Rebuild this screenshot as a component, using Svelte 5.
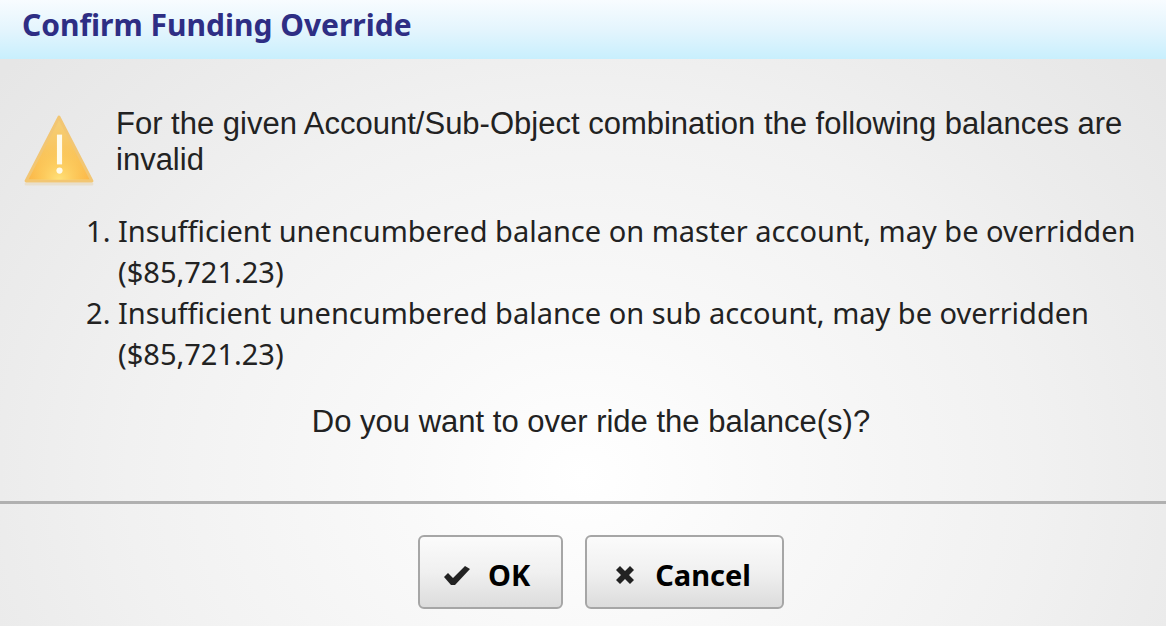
<script lang="ts">
    let title = "Confirm Funding Override"
    let balances: string[] = [
        "Insufficient unencumbered balance on master account, may be overridden ($85,721.23)",
        "Insufficient unencumbered balance on sub account, may be overridden ($85,721.23)",
    ]
    let open = $state(true)

    const close = () => {
        open = false
    }
</script>

{#if open}
    <div class="dialog" role="alertdialog" aria-labelledby="dialog-title" aria-describedby="dialog-message">
        <header>
            <h1 id="dialog-title">{title}</h1>
        </header>
        <div class="content">
            <div class="message">
                <svg class="warning" viewBox="0 0 72 72" aria-hidden="true">
                    <defs>
                        <linearGradient id="body" x1="0" y1="0" x2="0" y2="1">
                            <stop offset="0" stop-color="#f3cf7c" />
                            <stop offset="0.5" stop-color="#f9c65f" />
                            <stop offset="1" stop-color="#fbb344" />
                        </linearGradient>
                        <radialGradient id="glow" cx="0.5" cy="1" r="0.55">
                            <stop offset="0" stop-color="#ffe27c" />
                            <stop offset="1" stop-color="#ffd45c" stop-opacity="0" />
                        </radialGradient>
                    </defs>
                    <path d="M4 70h64" stroke="#e8dfcd" stroke-width="3" stroke-linecap="round" />
                    <path d="M36 5 68 67H4Z" fill="url(#body)" stroke="#f2c673" stroke-width="3" stroke-linejoin="round" />
                    <path d="M36 7 66 66H6Z" fill="url(#glow)" />
                    <path d="M34 22h5v29h-5Z" fill="#fffbea" />
                    <circle cx="36.500" cy="57" r="3" fill="#fffbea" />
                </svg>
                <p id="dialog-message">
                    For the given Account/Sub-Object combination the following balances are invalid
                </p>
            </div>
            <ol>
                {#each balances as balance}
                    <li>{balance}</li>
                {/each}
            </ol>
            <p class="question">Do you want to over ride the balance(s)?</p>
        </div>
        <footer>
            <button type="button" onclick={close}>
                <svg class="icon" viewBox="0 0 26 26" aria-hidden="true">
                    <path d="M0 15 4 11 9 16 21 4 26 7 11 23H7Z" fill="#222" />
                </svg>
                <span>OK</span>
            </button>
            <button type="button" onclick={close}>
                <svg class="icon" viewBox="0 0 26 26" aria-hidden="true">
                    <path d="M5 8 9 4 14 9 19 4 23 8 18 13 23 18 19 22 14 17 9 22 5 18 10 13Z" fill="#222" />
                </svg>
                <span>Cancel</span>
            </button>
        </footer>
    </div>
{/if}

<style>
    :global(body) {
        margin: 0;
    }

    .dialog {
        display: flex;
        flex-direction: column;
        min-height: 100vh;
        background: radial-gradient(ellipse 65% 100% at 50% 76%, #fff 0%, #f9f9f9 24%, #f1f1f1 60%, #ececec 77%, #e6e6e6 100%);
        color: #222;
        font-family: "Liberation Sans", Arial, sans-serif;
        font-size: 31px;
        line-height: 36px;
    }

    header {
        padding: 5px 22px 14px;
        background: linear-gradient(#f8fcff, #e4f5fd 50%, #c8effd);
    }

    h1 {
        margin: 0;
        color: #2e2e84;
        font-family: "Noto Sans", "Open Sans", sans-serif;
        font-size: 30px;
        font-weight: 700;
        line-height: 40px;
    }

    .content {
        flex: 1;
        padding: 47px 22px 0;
        border-bottom: 3px solid #b0b0b0;
    }

    .message {
        display: flex;
        gap: 20px;
    }

    .warning {
        flex: none;
        width: 74px;
        height: 74px;
        margin-top: 6px;
    }

    p {
        margin: 0;
    }

    ol {
        margin: 24px 0 30px;
        padding-left: 96px;
        font-family: "Noto Sans", "Open Sans", sans-serif;
        font-size: 29px;
        line-height: 41px;
    }

    .question {
        padding-left: 16px;
        text-align: center;
    }

    footer {
        display: flex;
        justify-content: center;
        gap: 22px;
        padding: 31px 0 17px 36px;
    }

    button {
        display: flex;
        align-items: center;
        gap: 18px;
        padding: 18px 31px 12px 24px;
        border: 2px solid #a6a6a6;
        border-radius: 6px;
        background: linear-gradient(#fbfbfb, #f0f0f0 50%, #dcdcdc);
        color: #000;
        font-family: "Noto Sans", "Open Sans", sans-serif;
        font-size: 29px;
        font-weight: 700;
        line-height: 40px;
    }

    .icon {
        width: 26px;
        height: 26px;
    }
</style>
